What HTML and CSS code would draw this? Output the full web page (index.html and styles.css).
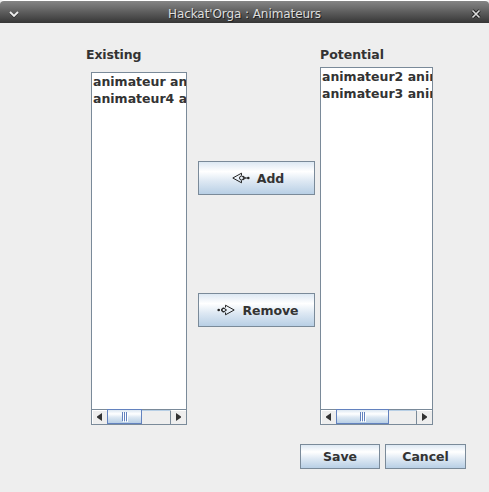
FILE: index.html
```html
<!DOCTYPE html>
<html lang="en">
<head>
<meta charset="utf-8">
<title>Hackat'Orga : Animateurs</title>
<link rel="stylesheet" href="styles.css">
</head>
<body>
<div class="window">
  <header class="titlebar">
    <svg class="menu-icon" width="10" height="8" viewBox="0 0 10 8"><path d="M1 3 5 7 9 3" stroke="#222" stroke-width="1.5" fill="none"/><path d="M1 2 5 6 9 2" stroke="#eee" stroke-width="1.8" fill="none"/></svg>
    <h1 class="title">Hackat'Orga : Animateurs</h1>
    <svg class="close-icon" width="10" height="10" viewBox="0 0 10 10"><path d="M1.5 1.5 8.5 8.5M8.5 1.5 1.5 8.5" stroke="#222" stroke-width="3.4"/><path d="M1.5 1.5 8.5 8.5M8.5 1.5 1.5 8.5" stroke="#ddd" stroke-width="1.6"/></svg>
  </header>
  <main class="content">
    <section class="column existing">
      <h2 class="label">Existing</h2>
      <div class="listbox">
        <ul class="items"><li>animateur ani</li><li>animateur4 a</li></ul>
        <div class="scrollbar">
          <span class="arrow left"><svg width="5" height="8"><path d="M5 0V8L0 4.5V3.5Z" fill="#333"/></svg></span>
          <span class="thumb"><i></i><i></i><i></i></span>
          <span class="track"></span>
          <span class="arrow right"><svg width="5" height="8"><path d="M0 0V8L5 4.5V3.5Z" fill="#333"/></svg></span>
        </div>
      </div>
    </section>
    <div class="transfer">
      <button class="button"><svg class="arrow-icon" width="18" height="12" viewBox="0 0 18 12" fill="none" stroke="#222"><path d="M.8 6 9.5 1.2V3.5M.8 6 9.5 10.8V8.5M11 4 13.5 6 11 8"/><circle cx="9.5" cy="6" r="2"/><path d="M11.5 6H15"/><circle cx="16.3" cy="6" r="1.3" fill="#222" stroke="none"/></svg>Add</button>
      <button class="button"><svg class="arrow-icon" width="18" height="12" viewBox="0 0 18 12" fill="none" stroke="#222"><path d="M17.2 6 8.5 1.2V3.5M17.2 6 8.5 10.8V8.5M7 4 4.5 6 7 8"/><circle cx="6.5" cy="6" r="2"/><path d="M8.5 6H10"/><circle cx="1.7" cy="6" r="1.3" fill="#222" stroke="none"/></svg>Remove</button>
    </div>
    <section class="column potential">
      <h2 class="label">Potential</h2>
      <div class="listbox">
        <ul class="items"><li>animateur2 anim</li><li>animateur3 anim</li></ul>
        <div class="scrollbar">
          <span class="arrow left"><svg width="5" height="8"><path d="M5 0V8L0 4.5V3.5Z" fill="#333"/></svg></span>
          <span class="thumb"><i></i><i></i><i></i></span>
          <span class="track"></span>
          <span class="arrow right"><svg width="5" height="8"><path d="M0 0V8L5 4.5V3.5Z" fill="#333"/></svg></span>
        </div>
      </div>
    </section>
  </main>
  <footer class="actions">
    <button class="button">Save</button>
    <button class="button cancel">Cancel</button>
  </footer>
</div>
</body>
</html>
```
FILE: styles.css
```css
* { box-sizing: border-box; }
body {
  margin: 0;
  background: #eee;
  color: #333;
  font: bold 12.5px/17px "DejaVu Sans", sans-serif;
}
.window {
  width: 489px;
  height: 492px;
  overflow: hidden;
  display: flex;
  flex-direction: column;
}
.titlebar {
  height: 23px;
  flex: none;
  display: flex;
  align-items: center;
  justify-content: space-between;
  padding: 3px 8px 0 9px;
  border-top: 1px solid #fff;
  border-radius: 4px 4px 0 0;
  background: linear-gradient(#858585, #363636);
}
.title {
  margin: 0 1px 0 0;
  color: #ddd;
  font: 12px/16px "DejaVu Sans", sans-serif;
  letter-spacing: -0.08px;
  text-shadow: 1px 1px 0 #222;
  white-space: nowrap;
}
.content {
  height: 402px;
  flex: none;
  display: flex;
  padding-left: 86px;
}
.column {
  padding-top: 23px;
  display: flex;
  flex-direction: column;
}
.existing { width: 101px; }
.potential { width: 113px; margin-left: 5px; }
.label { margin: 0; font: inherit; }
.existing .label { letter-spacing: -0.15px; }
.listbox {
  flex: 1;
  min-height: 0;
  display: flex;
  flex-direction: column;
  background: #fff;
  border: 1px solid #7a8a99;
}
.existing .listbox { margin: 9px 0 0 5px; }
.potential .listbox { margin-top: 4px; }
.items {
  flex: 1;
  margin: 0;
  padding: 0 0 0 1px;
  list-style: none;
  overflow: hidden;
  white-space: nowrap;
}
.scrollbar {
  height: 15px;
  flex: none;
  display: flex;
  border-top: 1px solid #7a8a99;
  background: #eee;
}
.arrow {
  width: 15px;
  flex: none;
  display: flex;
  align-items: center;
  justify-content: center;
  border: solid #fff;
  border-width: 1px 0 0 1px;
  padding: 0 2px 2px 0;
}
.right { width: 16px; border-left: 1px solid #7a8a99; padding-right: 0; }
.thumb {
  width: 35px;
  flex: none;
  display: flex;
  align-items: center;
  justify-content: center;
  gap: 1px;
  margin-top: -1px;
  border: 1px solid #6382bf;
  background: linear-gradient(#dde8f3, #fff 30%, #dde8f3 55%, #b8cfe5);
}
.potential .thumb { width: 53px; }
.thumb i { width: 1px; height: 9px; background: #6382bf; box-shadow: 1px 1px #fff; }
.track { flex: 1; border-top: 1px solid #b8cfe5; }
.transfer {
  width: 117px;
  margin-left: 11px;
  padding-top: 138px;
  display: flex;
  flex-direction: column;
  gap: 98px;
}
.button {
  height: 25px;
  width: 80px;
  padding: 0;
  display: flex;
  align-items: center;
  justify-content: center;
  color: #333;
  font: inherit;
  letter-spacing: -0.05px;
  border: 1px solid #7a8a99;
  border-radius: 0;
  background: linear-gradient(#dde8f3, #fff 30%, #dde8f3 60%, #b8cfe5);
}
.transfer .button { width: 117px; height: 34px; padding-left: 3px; }
.arrow-icon { margin-right: 7px; }
.actions {
  display: flex;
  gap: 5px;
  padding: 19px 0 0 300px;
}
.cancel { width: 81px; }
```
